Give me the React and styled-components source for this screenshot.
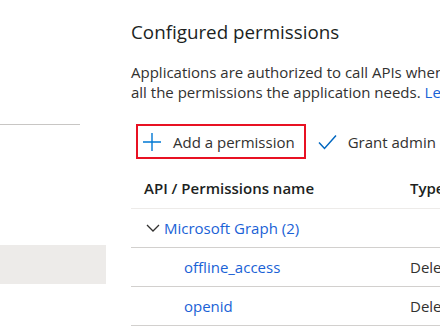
import React from 'react';
import styled, { createGlobalStyle } from 'styled-components';

const GlobalStyle = createGlobalStyle`
  html, body {
    margin: 0;
    padding: 0;
    background: #ffffff;
    overflow: hidden;
  }
  body {
    font-family: "Segoe UI", "Open Sans", "Liberation Sans", sans-serif;
    color: #323130;
    -webkit-font-smoothing: antialiased;
  }
`;

const Page = styled.div`
  display: flex;
  width: 440px;
  height: 326px;
  overflow: hidden;
`;

const Sidebar = styled.div`
  flex: 0 0 106px;
  display: flex;
  flex-direction: column;
`;

const Divider = styled.div`
  width: 80px;
  height: 1px;
  margin-top: 124px;
  background: #c8c6c4;
`;

const NavItem = styled.div`
  height: 39px;
  margin-top: 120px;
  background: #edebe9;
`;

const Main = styled.div`
  flex: 1;
  padding-left: 25px;
  min-width: 0;
`;

const Title = styled.h2`
  margin: 18px 0 0;
  font-size: 18.8px;
  line-height: 28px;
  font-weight: 400;
  color: #201f1e;
  white-space: nowrap;
`;

const Desc = styled.p`
  margin: 16px 0 0;
  font-size: 15px;
  line-height: 20px;
  color: #323130;
  white-space: nowrap;
`;

const DescLink = styled.a`
  color: #1a62d6;
`;

const Toolbar = styled.div`
  display: flex;
  align-items: center;
  gap: 10px;
  margin-top: 22px;
  white-space: nowrap;
`;

const Command = styled.button`
  display: flex;
  align-items: center;
  gap: 11px;
  height: 35px;
  box-sizing: border-box;
  padding: 0 9px 0 4px;
  margin-left: 5px;
  background: #ffffff;
  border: 2px solid ${(p) => (p.$outlined ? '#e81123' : 'transparent')};
  font-family: inherit;
  font-size: 15px;
  color: #323130;
  cursor: pointer;
  &:last-child {
    margin-left: 0;
    padding-left: 0;
  }
`;

const Table = styled.div`
  margin-top: 9px;
  width: 420px;
`;

const Row = styled.div`
  display: grid;
  grid-template-columns: 267px 1fr;
  align-items: center;
  height: ${(p) => (p.$header ? '40px' : '38px')};
  border-bottom: 1px solid ${(p) => (p.$header ? '#edebe9' : '#d2d0ce')};
  font-size: 15px;
  white-space: nowrap;
`;

const Cell = styled.div`
  display: flex;
  align-items: center;
  padding-left: ${(p) => p.$indent || 12}px;
  color: ${(p) => (p.$head ? '#201f1e' : '#323130')};
  font-weight: ${(p) => (p.$head ? 600 : 400)};
`;

const Link = styled.a`
  color: #1a62d6;
  cursor: pointer;
`;

const Chevron = styled.svg`
  width: 14px;
  height: 10px;
  margin-right: 4px;
`;

function PlusIcon() {
  return (
    <svg width="20" height="20" viewBox="0 0 20 20">
      <path d="M10 1v18M1 10h18" stroke="#0078d4" strokeWidth="1.4" fill="none" />
    </svg>
  );
}

function CheckIcon() {
  return (
    <svg width="19" height="16" viewBox="0 0 19 16">
      <path d="M1 8.5l5.5 6L18 1.5" stroke="#0067c0" strokeWidth="1.5" fill="none" />
    </svg>
  );
}

const permissions = [
  { name: 'offline_access', type: 'Delegated' },
  { name: 'openid', type: 'Delegated' },
];

export default function App() {
  return (
    <>
      <GlobalStyle />
      <Page>
        <Sidebar>
          <Divider />
          <NavItem />
        </Sidebar>
        <Main>
          <Title>Configured permissions</Title>
          <Desc>
            Applications are authorized to call APIs when they are granted permissions by users/admins as part of the consent process.
            <br />
            all the permissions the application needs. <DescLink>Learn more about permissions and consent</DescLink>
          </Desc>
          <Toolbar>
            <Command $outlined>
              <PlusIcon />
              Add a permission
            </Command>
            <Command>
              <CheckIcon />
              Grant admin consent for Default Directory
            </Command>
          </Toolbar>
          <Table>
            <Row $header>
              <Cell $head $indent={13}>API / Permissions name</Cell>
              <Cell $head>Type</Cell>
            </Row>
            <Row>
              <Cell $indent={15}>
                <Chevron viewBox="0 0 14 10">
                  <path d="M1 2l6 6 6-6" stroke="#323130" strokeWidth="1.3" fill="none" />
                </Chevron>
                <Link>Microsoft Graph (2)</Link>
              </Cell>
              <Cell />
            </Row>
            {permissions.map((p) => (
              <Row key={p.name}>
                <Cell $indent={53}>
                  <Link>{p.name}</Link>
                </Cell>
                <Cell>{p.type}</Cell>
              </Row>
            ))}
          </Table>
        </Main>
      </Page>
    </>
  );
}
